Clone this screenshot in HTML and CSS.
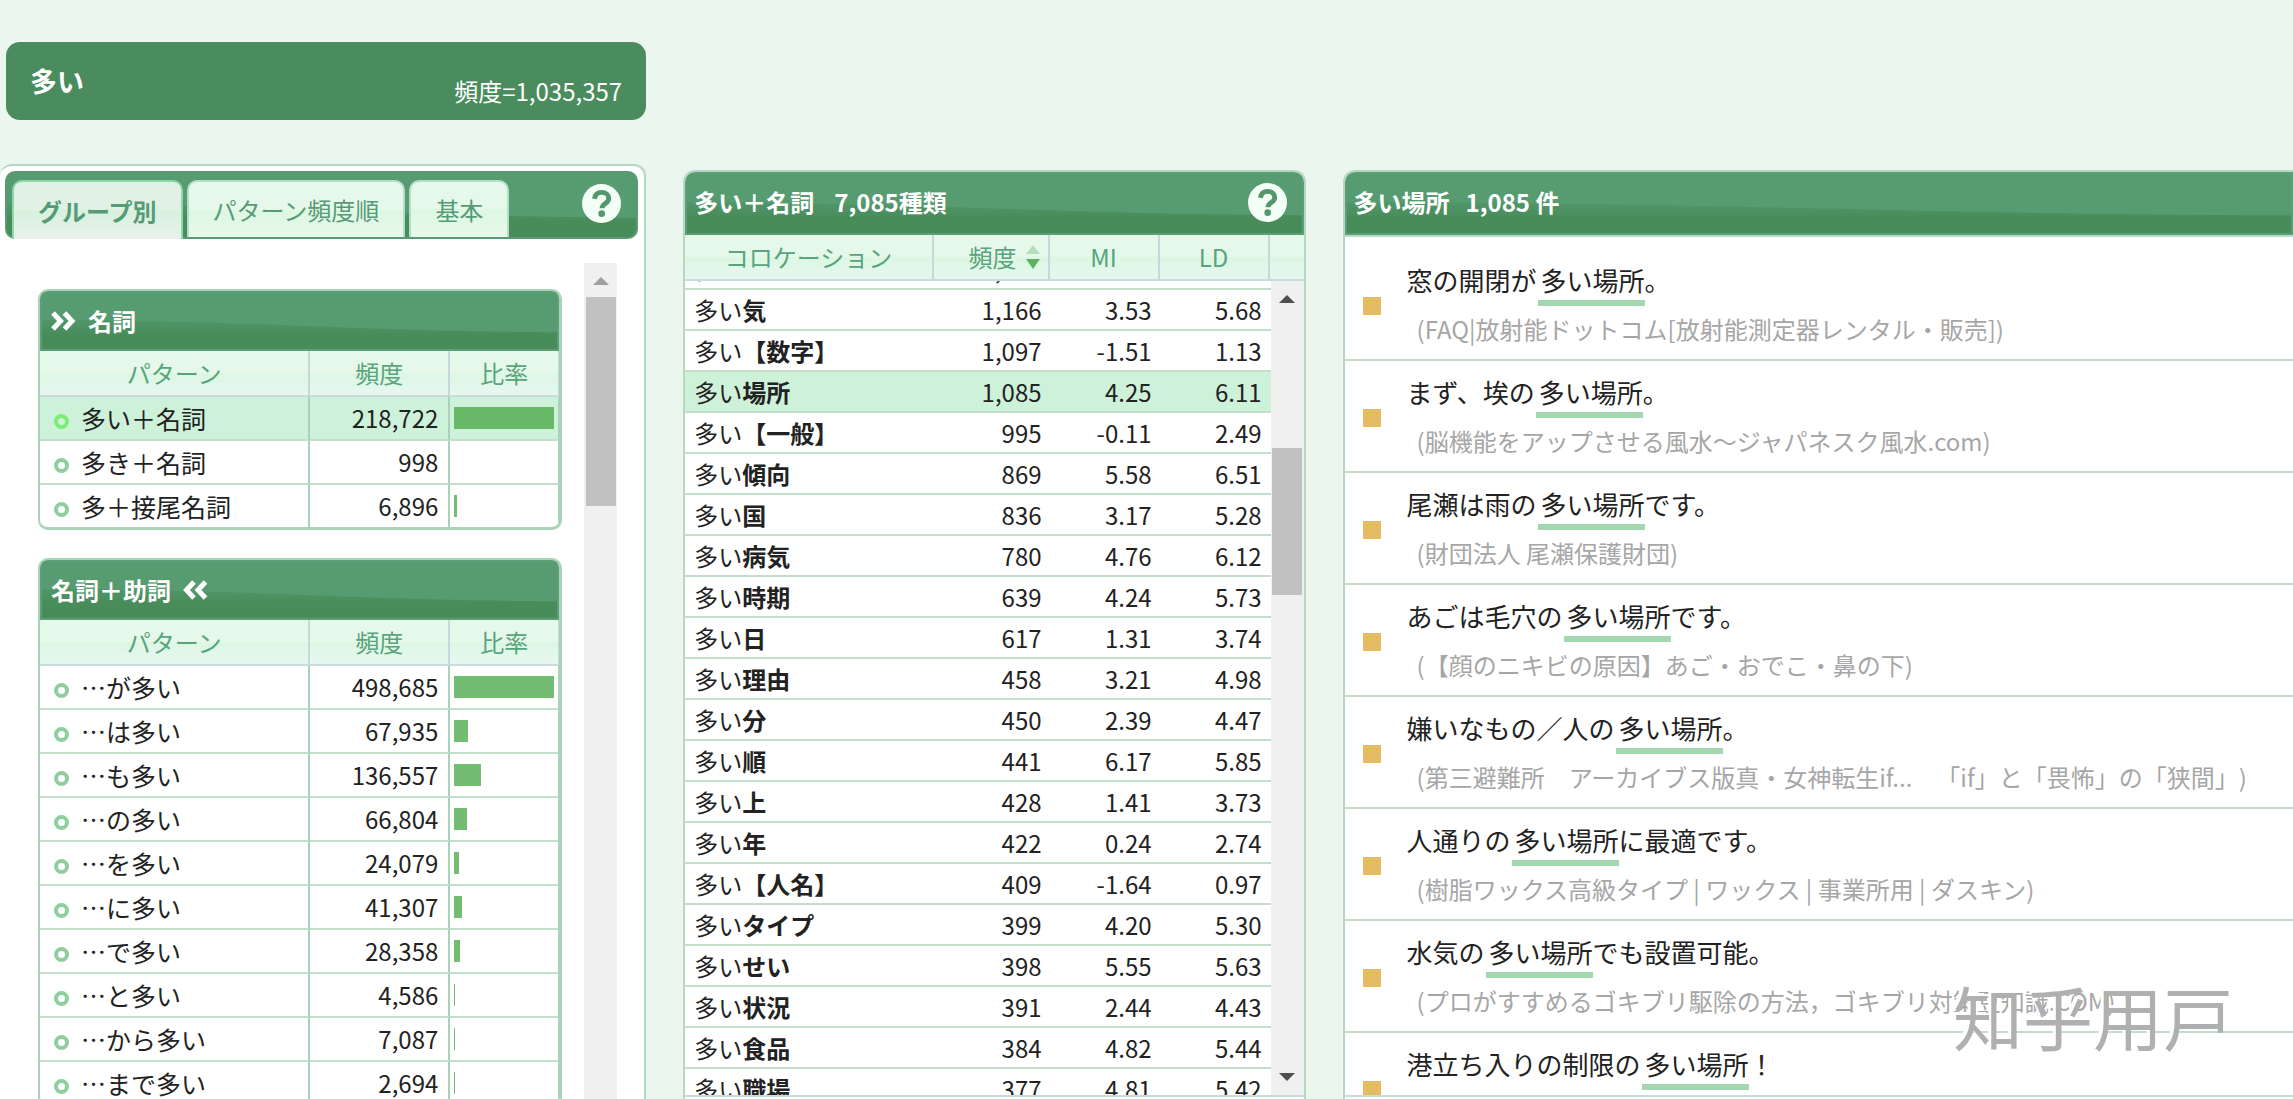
FILE: index.html
```html
<!DOCTYPE html>
<html lang="ja">
<head>
<meta charset="utf-8">
<title>多い</title>
<link rel="stylesheet" href="styles.css">
</head>
<body>
<header class="word">
  <h1 class="word-title">多い</h1>
  <span class="word-freq">頻度=1,035,357</span>
</header>
<main class="columns">
  <section class="panel patterns">
    <nav class="bar tabs">
      <button class="tab tab-active">グループ別</button>
      <button class="tab">パターン頻度順</button>
      <button class="tab">基本</button>
      <button class="help" aria-label="ヘルプ"><svg viewBox="0 0 40 40"><circle cx="20" cy="20" r="20"/><path d="M12.8 15.2c.6-4.4 3.6-6.6 7.4-6.6 4.2 0 7.2 2.5 7.2 6.3 0 5.3-6.9 5-6.9 10"/><circle class="dot" cx="20.2" cy="30.4" r="3.4"/></svg></button>
    </nav>
    <div class="scroll-area">
      <div class="groups">
        <section class="group">
          <h2 class="bar group-title"><svg class="chev" viewBox="0 0 25 20"><path d="M2 2l7.5 8L2 18M13.500 2l7.500 8-7.500 8"/></svg>名詞</h2>
          <table class="ptable">
            <colgroup><col><col class="c-freq"><col class="c-rate"></colgroup>
            <thead><tr><th>パターン</th><th>頻度</th><th>比率</th></tr></thead>
            <tbody>
              <tr class="selected"><td>多い＋名詞</td><td>218,722</td><td><div class="rate" style="width:100px"></div></td></tr>
              <tr><td>多き＋名詞</td><td>998</td><td></td></tr>
              <tr><td>多＋接尾名詞</td><td>6,896</td><td><div class="rate" style="width:3px"></div></td></tr>
            </tbody>
          </table>
        </section>
        <section class="group">
          <h2 class="bar group-title">名詞＋助詞<svg class="chev" viewBox="0 0 25 20"><path d="M11 2l-7.500 8 7.500 8M22.500 2L15 10l7.500 8"/></svg></h2>
          <table class="ptable">
            <colgroup><col><col class="c-freq"><col class="c-rate"></colgroup>
            <thead><tr><th>パターン</th><th>頻度</th><th>比率</th></tr></thead>
            <tbody>
              <tr><td>…が多い</td><td>498,685</td><td><div class="rate" style="width:100px"></div></td></tr>
              <tr><td>…は多い</td><td>67,935</td><td><div class="rate" style="width:14px"></div></td></tr>
              <tr><td>…も多い</td><td>136,557</td><td><div class="rate" style="width:27px"></div></td></tr>
              <tr><td>…の多い</td><td>66,804</td><td><div class="rate" style="width:13px"></div></td></tr>
              <tr><td>…を多い</td><td>24,079</td><td><div class="rate" style="width:5px"></div></td></tr>
              <tr><td>…に多い</td><td>41,307</td><td><div class="rate" style="width:8px"></div></td></tr>
              <tr><td>…で多い</td><td>28,358</td><td><div class="rate" style="width:6px"></div></td></tr>
              <tr><td>…と多い</td><td>4,586</td><td><div class="rate" style="width:1px"></div></td></tr>
              <tr><td>…から多い</td><td>7,087</td><td><div class="rate" style="width:1px"></div></td></tr>
              <tr><td>…まで多い</td><td>2,694</td><td><div class="rate" style="width:1px"></div></td></tr>
            </tbody>
          </table>
        </section>
      </div>
      <div class="scrollbar scrollbar-left"><i class="arrow-up"></i><i class="thumb"></i></div>
    </div>
  </section>

  <section class="panel framed">
    <h2 class="bar panel-title"><span>多い＋名詞</span><span class="kinds">7,085種類</span>
      <button class="help" aria-label="ヘルプ"><svg viewBox="0 0 40 40"><circle cx="20" cy="20" r="20"/><path d="M12.8 15.2c.6-4.4 3.6-6.6 7.4-6.6 4.2 0 7.2 2.5 7.2 6.3 0 5.3-6.9 5-6.9 10"/><circle class="dot" cx="20.2" cy="30.4" r="3.4"/></svg></button>
    </h2>
    <table class="ctable chead">
      <colgroup><col><col class="c-n1"><col class="c-n2"><col class="c-n2"><col class="c-bar"></colgroup>
      <thead><tr><th>コロケーション</th><th class="sorted"><span class="sort">頻度<svg viewBox="0 0 16 24"><path class="up" d="M8 0l7 9H1z"/><path d="M8 24L1 14h14z"/></svg></span></th><th>MI</th><th>LD</th><th></th></tr></thead>
    </table>
    <div class="viewport">
      <div class="rows">
        <table class="ctable cbody">
          <colgroup><col><col class="c-n1"><col class="c-n2"><col class="c-n2"></colgroup>
          <tbody>
            <tr><td>多い<b>こと</b></td><td>1,170</td><td>2.10</td><td>4.52</td></tr>
            <tr><td>多い<b>気</b></td><td>1,166</td><td>3.53</td><td>5.68</td></tr>
            <tr><td>多い<b>【数字】</b></td><td>1,097</td><td>-1.51</td><td>1.13</td></tr>
            <tr class="selected"><td>多い<b>場所</b></td><td>1,085</td><td>4.25</td><td>6.11</td></tr>
            <tr><td>多い<b>【一般】</b></td><td>995</td><td>-0.11</td><td>2.49</td></tr>
            <tr><td>多い<b>傾向</b></td><td>869</td><td>5.58</td><td>6.51</td></tr>
            <tr><td>多い<b>国</b></td><td>836</td><td>3.17</td><td>5.28</td></tr>
            <tr><td>多い<b>病気</b></td><td>780</td><td>4.76</td><td>6.12</td></tr>
            <tr><td>多い<b>時期</b></td><td>639</td><td>4.24</td><td>5.73</td></tr>
            <tr><td>多い<b>日</b></td><td>617</td><td>1.31</td><td>3.74</td></tr>
            <tr><td>多い<b>理由</b></td><td>458</td><td>3.21</td><td>4.98</td></tr>
            <tr><td>多い<b>分</b></td><td>450</td><td>2.39</td><td>4.47</td></tr>
            <tr><td>多い<b>順</b></td><td>441</td><td>6.17</td><td>5.85</td></tr>
            <tr><td>多い<b>上</b></td><td>428</td><td>1.41</td><td>3.73</td></tr>
            <tr><td>多い<b>年</b></td><td>422</td><td>0.24</td><td>2.74</td></tr>
            <tr><td>多い<b>【人名】</b></td><td>409</td><td>-1.64</td><td>0.97</td></tr>
            <tr><td>多い<b>タイプ</b></td><td>399</td><td>4.20</td><td>5.30</td></tr>
            <tr><td>多い<b>せい</b></td><td>398</td><td>5.55</td><td>5.63</td></tr>
            <tr><td>多い<b>状況</b></td><td>391</td><td>2.44</td><td>4.43</td></tr>
            <tr><td>多い<b>食品</b></td><td>384</td><td>4.82</td><td>5.44</td></tr>
            <tr><td>多い<b>職場</b></td><td>377</td><td>4.81</td><td>5.42</td></tr>
          </tbody>
        </table>
      </div>
      <div class="scrollbar scrollbar-mid"><i class="arrow-up"></i><i class="thumb"></i><i class="arrow-down"></i></div>
    </div>
  </section>

  <section class="panel framed examples">
    <h2 class="bar panel-title"><span>多い場所</span><span class="count">1,085 件</span></h2>
    <ul class="sentences">
      <li><i class="mark"></i><div><p>窓の開閉が<em>多い場所</em>。</p><cite>(FAQ|放射能ドットコム[放射能測定器レンタル・販売])</cite></div></li>
      <li><i class="mark"></i><div><p>まず、埃の<em>多い場所</em>。</p><cite>(脳機能をアップさせる風水～ジャパネスク風水.com)</cite></div></li>
      <li><i class="mark"></i><div><p>尾瀬は雨の<em>多い場所</em>です。</p><cite>(財団法人 尾瀬保護財団)</cite></div></li>
      <li><i class="mark"></i><div><p>あごは毛穴の<em>多い場所</em>です。</p><cite>(【顔のニキビの原因】あご・おでこ・鼻の下)</cite></div></li>
      <li><i class="mark"></i><div><p>嫌いなもの／人の<em>多い場所</em>。</p><cite>(第三避難所　アーカイブス版真・女神転生if...　「if」と「畏怖」の「狭間」)</cite></div></li>
      <li><i class="mark"></i><div><p>人通りの<em>多い場所</em>に最適です。</p><cite>(樹脂ワックス高級タイプ | ワックス | 事業所用 | ダスキン)</cite></div></li>
      <li><i class="mark"></i><div><p>水気の<em>多い場所</em>でも設置可能。</p><cite>(プロがすすめるゴキブリ駆除の方法，ゴキブリ対策豆知識.COM)</cite></div></li>
      <li><i class="mark"></i><div><p>港立ち入りの制限の<em>多い場所</em>！</p><cite>(港湾)</cite></div></li>
    </ul>
  </section>
</main>
<div class="watermark">知乎用户</div>
</body>
</html>
```
FILE: styles.css
```css
*, *::before { box-sizing: border-box; }

body {
  margin: 0;
  height: 100vh;
  overflow: hidden;
  display: flex;
  flex-direction: column;
  background: #ebf6ee;
  color: #222;
  font: 24px/36px "Noto Sans CJK JP", sans-serif;
  text-spacing-trim: space-all;
}

h1, h2, p, ul { margin: 0; padding: 0; }
button { font: inherit; border: 0; background: none; padding: 0; }

.word {
  display: flex;
  justify-content: space-between;
  align-items: center;
  width: calc((100% - 75px) * 0.2913 - 6px);
  height: 78px;
  margin: 42px 0 44px 6px;
  padding: 0 24px;
  border-radius: 14px;
  background: #4a8c5d;
  color: #fff;
}
.word-title { font-size: 27px; line-height: 40px; }
.word-freq { padding-top: 20px; }

.columns {
  flex: 1;
  min-height: 0;
  display: grid;
  grid-template-columns: 646fr 622fr 950fr;
  grid-template-rows: 100%;
  column-gap: 37px;
}

.panel {
  display: flex;
  flex-direction: column;
  min-width: 0;
  overflow: hidden;
  background: #fff;
  border: 2px solid #b5d8c3;
  border-bottom: 0;
  border-radius: 12px 12px 0 0;
}

.bar {
  display: flex;
  align-items: center;
  flex-shrink: 0;
  border: 2px solid #5c9e77;
  background:
    url("data:image/svg+xml,%3Csvg xmlns='http://www.w3.org/2000/svg' viewBox='0 0 100 100' preserveAspectRatio='none'%3E%3Cdefs%3E%3ClinearGradient id='g' x2='0' y2='1'%3E%3Cstop offset='0' stop-color='%23519669'/%3E%3Cstop offset='.5' stop-color='%23488c5a'/%3E%3Cstop offset='1' stop-color='%23488c5a'/%3E%3C/linearGradient%3E%3C/defs%3E%3Cpath fill='url(%23g)' d='M0 48C40 48 60 68 100 70V100H0z'/%3E%3C/svg%3E") 0 0 / 100% 100% no-repeat,
    linear-gradient(#579b71, #579b71);
  color: #fff;
  font-size: 24px;
  font-weight: 700;
}

.patterns { border-left: 0; }
.tabs {
  align-items: flex-end;
  gap: 4px;
  height: 68px;
  margin: 5px 6px 0 5px;
  padding: 0 15px 0 5px;
  border-color: #579b71 #579b71 #5c9a73;
  border-radius: 10px;
  font-weight: 400;
}
.tab {
  height: 57px;
  padding: 0 24px;
  border: 2px solid #b4dccb;
  border-bottom: 0;
  border-radius: 10px 10px 0 0;
  background: linear-gradient(#e6f8e9 50%, #dcf7e2 50%, #e8f9eb);
  color: #559b76;
  white-space: nowrap;
}
.tab-active {
  height: 59px;
  margin-bottom: -2px;
  border-color: #8fd6ab;
  background: linear-gradient(#e2f1e6 50%, #d8f1dd 50%, #e9f2ec);
  font-weight: 700;
}

.help { width: 39px; height: 39px; margin-left: auto; flex-shrink: 0; }
.help svg { display: block; width: 39px; height: 39px; }
.help circle { fill: #f3fff6; }
.help path { fill: none; stroke: #55976d; stroke-width: 5; }
.help .dot { fill: #55976d; }
.tabs .help { margin-bottom: 14px; }

.scroll-area { flex: 1; min-height: 0; display: flex; padding: 24px 27px 0 38px; }
.groups { flex: 1; padding-top: 26px; min-width: 0; }
.group {
  margin: 0 22px 28px 0;
  border: 2px solid #a9d3b8;
  border-right-width: 3px;
  border-bottom-width: 3px;
  border-radius: 10px;
  overflow: hidden;
}
.group-title { height: 60px; padding: 0 9px; gap: 12px; }
.chev { width: 25px; height: 20px; }
.chev path { fill: none; stroke: #fff; stroke-width: 5; }

table { width: 100%; table-layout: fixed; border-collapse: separate; border-spacing: 0; }
th, td { padding: 0; white-space: nowrap; overflow: hidden; }
th {
  height: 46px;
  border-right: 2px solid #c3d9dc;
  border-bottom: 2px solid #c9dbdd;
  background: linear-gradient(#e6f8e9 50%, #dcf7e2 50%, #e7f7f1);
  color: #57a47d;
  font-weight: 400;
}
.c-freq { width: 140px; }
.c-rate { width: 109px; }
.ptable td { height: 44px; border-right: 2px solid #a9d3b8; border-bottom: 2px solid #c3dec9; }
.ptable th:last-child, .ptable td:last-child { border-right-width: 1px; }
.ptable tbody tr:last-child td { border-bottom: 0; height: 42px; }
.ptable td:first-child { padding-left: 14px; font-size: 25px; }
.ptable td:first-child::before {
  content: "";
  display: inline-block;
  width: 15px;
  height: 15px;
  margin: 0 12px 2px 0;
  vertical-align: middle;
  border: 4px solid #8fcf9f;
  border-radius: 50%;
}
.ptable .selected td:first-child::before { border-color: #7dee73; }
.ptable td:nth-child(2) { text-align: right; padding-right: 10px; }
.ptable td:last-child { padding-left: 4px; }
.selected td { background: #cef1da; }
.rate { height: 22px; background: #72bd71; }
.selected .rate { background: #67b867; }

.scrollbar { display: flex; flex-direction: column; align-items: center; width: 33px; background: #f0f0f0; }
.arrow-up, .arrow-down { border: 8px solid transparent; flex-shrink: 0; }
.arrow-up { border-top: 0; border-bottom-color: #505050; }
.arrow-down { border-bottom: 0; border-top-color: #505050; margin: auto 0 14px; }
.thumb { width: 30px; background: #c1c1c1; }
.scrollbar-left .arrow-up { margin: 14px 0 12px; border-bottom-color: #a0a0a0; }
.scrollbar-left .thumb { height: 209px; }
.scrollbar-mid .arrow-up { margin: 14px 0 145px; }
.scrollbar-mid .thumb { height: 147px; }

.framed { margin-top: 6px; padding-bottom: 2px; }
.panel-title { height: 63px; padding: 0 15px 3px 7px; }
.kinds { margin-left: 20px; }
.count { margin-left: 16px; }

.c-n1 { width: 116px; }
.c-n2 { width: 110px; }
.c-bar { width: 34px; }
.ctable th:last-child { border-right: 0; }
.sort { display: flex; justify-content: flex-end; align-items: center; gap: 8px; padding-right: 7px; }
.sort svg { width: 16px; height: 24px; }
.sort path { fill: #5cb460; }
.sort .up { fill: #b4dfbb; }
.viewport { flex: 1; min-height: 0; display: flex; border-bottom: 2px solid #c9dbdd; }
.rows { flex: 1; min-width: 0; overflow: hidden; }
.cbody { margin-top: -32px; }
.cbody td { height: 41px; border-bottom: 2px solid #c3dec9; text-align: right; padding-right: 9px; }
.cbody td:first-child { text-align: left; padding-left: 9px; }

.examples { border-right: 0; border-top-right-radius: 0; }
.sentences {
  flex: 1;
  min-height: 0;
  overflow: hidden;
  list-style: none;
  padding-top: 12px;
  border-top: 2px solid #b9dcc8;
  border-bottom: 2px solid #c9dbdd;
}
.sentences li {
  display: flex;
  align-items: center;
  gap: 26px;
  height: 112px;
  padding: 0 18px 3px;
  border-bottom: 2px solid #c3dec9;
  white-space: nowrap;
}
.mark { width: 18px; height: 18px; margin-top: 6px; background: #e3bb60; }
.sentences p { font-size: 26px; line-height: 52px; }
.sentences em { font-style: normal; margin-left: 1px; padding: 0 0 2px 3px; border-bottom: 6px solid #a4d7af; }
.sentences cite { display: block; margin-left: 10px; color: #a6a6a6; font-style: normal; line-height: 46px; }

.watermark {
  position: absolute;
  right: 60px;
  bottom: 33px;
  font: 400 70px/100px "Noto Sans CJK SC", sans-serif;
  color: #b0b0b0;
  text-shadow: -3px -3px 0 #fff;
}
```
